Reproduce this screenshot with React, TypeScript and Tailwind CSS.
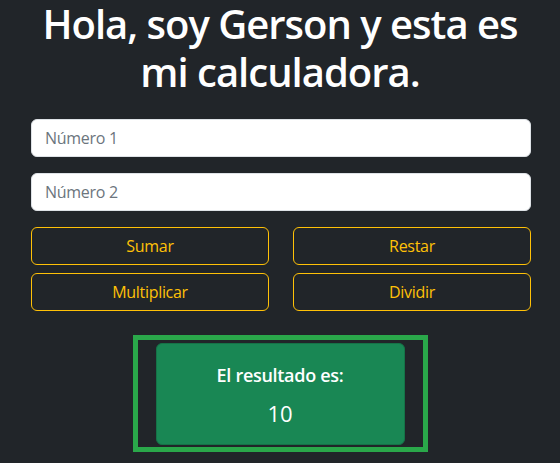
export default function App() {
  const font = { fontFamily: '"Open Sans", "Noto Sans", sans-serif' };
  return (
    <div className="min-h-[463px] w-full bg-[#212529] text-[#dee2e6]" style={font}>
      <h1 className="m-0 px-[20px] text-center text-[40px] font-semibold leading-[48px] tracking-[-1px] text-white">
        Hola, soy Gerson y esta es mi calculadora.
      </h1>
      <div className="pl-[31px] pr-[29px] pt-[23px]">
        <input
          className="block w-full h-[38px] rounded-[6px] border border-[#dee2e6] bg-white px-[13px] text-[16px] tracking-[-0.3px] text-[#212529] placeholder:text-[#6c757d] outline-none"
          placeholder="Número 1"
        />
        <input
          className="mt-4 block w-full h-[38px] rounded-[6px] border border-[#dee2e6] bg-white px-[13px] text-[16px] tracking-[-0.3px] text-[#212529] placeholder:text-[#6c757d] outline-none"
          placeholder="Número 2"
        />
        <div className="mt-4 grid grid-cols-2 gap-x-6 gap-y-2">
          <button className="h-[38px] rounded-[6px] border border-[#ffc107] bg-transparent text-[16px] tracking-[-0.3px] text-[#ffc107]">Sumar</button>
          <button className="h-[38px] rounded-[6px] border border-[#ffc107] bg-transparent text-[16px] tracking-[-0.3px] text-[#ffc107]">Restar</button>
          <button className="h-[38px] rounded-[6px] border border-[#ffc107] bg-transparent text-[16px] tracking-[-0.3px] text-[#ffc107]">Multiplicar</button>
          <button className="h-[38px] rounded-[6px] border border-[#ffc107] bg-transparent text-[16px] tracking-[-0.3px] text-[#ffc107]">Dividir</button>
        </div>
      </div>
      <div className="mt-[24px] flex justify-center">
        <div className="w-[295px] border-[5px] border-[#2aa84a] px-[18px] pt-[3px] pb-[2px]">
          <div className="flex h-[102px] flex-col items-center justify-center rounded-[6px] border border-[#157347] bg-[#198754] text-white">
            <div className="text-[18px] font-semibold leading-[24px] tracking-[-0.3px]">El resultado es:</div>
            <div className="mt-[13px] text-[22px] leading-[26px]">10</div>
          </div>
        </div>
      </div>
    </div>
  );
}
